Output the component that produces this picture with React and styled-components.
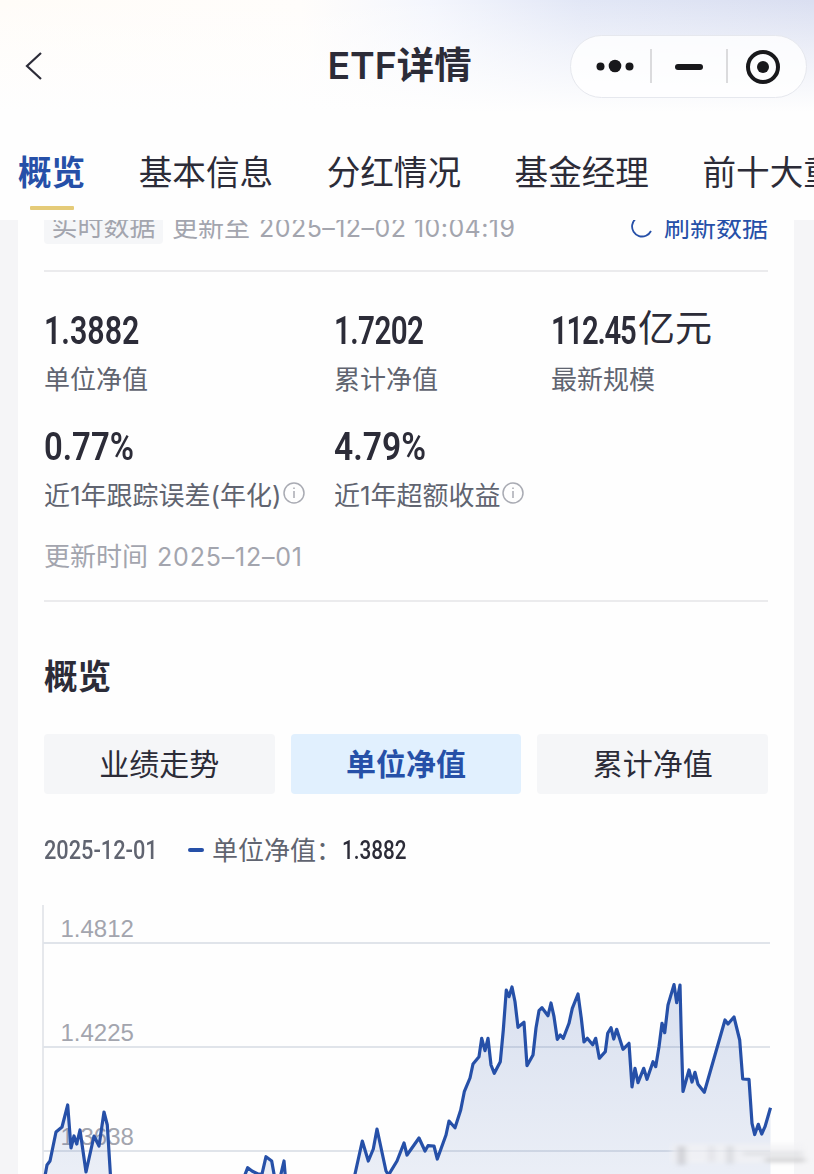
import React from "react";
import styled, { createGlobalStyle } from "styled-components";

const ink = "#2c2c38";
const blue = "#2650a8";

const GlobalStyle = createGlobalStyle`
  * { box-sizing: border-box; }
  html, body { margin: 0; height: 100%; overflow: hidden; }
  body {
    background: #f5f5f7;
    color: ${ink};
    font-family: Inter, "Noto Sans CJK SC", sans-serif;
  }
`;

const Screen = styled.div`
  width: 814px;
  height: 1174px;
  overflow: hidden;
  display: flex;
  flex-direction: column;
`;

const Header = styled.header`
  flex: none;
  height: 220px;
  background:
    linear-gradient(180deg, rgba(254, 254, 254, 0) 0, rgba(254, 254, 254, 0.5) 50px, #fefefe 112px),
    linear-gradient(90deg, #fffcf8 0, #fffdfb 300px, #f4f6fd 430px, #e2e7f6 580px, #dadff1 814px);
`;

const NavBar = styled.div`
  height: 132px;
  padding: 0 7px 0 24px;
  display: grid;
  grid-template-columns: 237px 1fr 237px;
  align-items: center;
`;

const BackIcon = styled.svg`
  width: 20px;
  height: 30px;
  display: block;
`;

const Title = styled.h1`
  margin: 0 32px 0 0;
  text-align: center;
  white-space: nowrap;
  font-size: 37.4px;
  font-weight: 600;
  line-height: 50px;
  span { font-weight: 700; }
`;

const Capsule = styled.div`
  justify-self: end;
  width: 237px;
  height: 63px;
  border: 1px solid #e6e8ee;
  border-radius: 32px;
  background: rgba(255, 255, 255, 0.8);
  svg { display: block; }
`;

const Tabs = styled.nav`
  display: flex;
  gap: 53.6px;
  padding: 17px 0 0 18px;
  overflow: hidden;
`;

const Tab = styled.div`
  flex: none;
  display: flex;
  flex-direction: column;
  align-items: center;
  gap: 9px;
  font-size: 33.6px;
  line-height: 48px;
  font-weight: ${(p) => (p.$active ? 700 : 400)};
  color: ${(p) => (p.$active ? blue : ink)};
  &::after {
    content: "";
    width: 44px;
    height: 4px;
    border-radius: 1px;
    background: ${(p) => (p.$active ? "#e5cb78" : "transparent")};
  }
`;

const Viewport = styled.div`
  flex: 1;
  min-height: 0;
  overflow: hidden;
  padding: 0 20px 0 18px;
`;

const Card = styled.main`
  display: flow-root;
  background: #fefefe;
  height: 100%;
  padding: 0 26px;
`;

const LiveRow = styled.div`
  display: flex;
  align-items: center;
  height: 36px;
  margin-top: -12px;
  font-size: 26px;
  line-height: 34px;
  color: #a3a5ae;
  white-space: nowrap;
`;

const Tag = styled.span`
  width: 119px;
  height: 36px;
  padding-top: 2px;
  text-align: center;
  background: #f5f6f8;
  border-radius: 4px;
  margin-right: 9px;
`;

const LiveText = styled.span`
  padding-top: 3px;
`;

const Stamp = styled.span`
  font-size: 25px;
  letter-spacing: ${(p) => p.$spacing}px;
  margin-left: 9px;
`;

const Refresh = styled.span`
  margin-left: auto;
  padding-top: 3px;
  display: flex;
  align-items: center;
  gap: 11px;
  color: ${blue};
  svg { margin-top: -3px; }
`;

const Divider = styled.hr`
  border: 0;
  height: 2px;
  margin: ${(p) => p.$top}px 0 0;
  background: #ebebed;
`;

const Stats = styled.section`
  display: grid;
  grid-template-columns: 290px 217px 1fr;
  row-gap: 20px;
  padding-top: 35px;
`;

const Stat = styled.div`
  height: 96px;
`;

const StatValue = styled.div`
  height: 48px;
  display: flex;
  align-items: center;
  font-size: 37px;
`;

const Unit = styled.span`
  line-height: 44px;
  padding-bottom: 4px;
`;

const Digits = styled.span`
  display: inline-block;
  width: ${(p) => p.$width}px;
  white-space: nowrap;
  font-family: Roboto, sans-serif;
  font-size: ${(p) => p.$size}px;
  font-weight: ${(p) => p.$weight || 600};
  letter-spacing: ${(p) => p.$spacing || 0}px;
  line-height: 1;
  color: ${(p) => p.$color || ink};
  transform: scaleX(${(p) => p.$scale || 0.8});
  transform-origin: 0 50%;
`;

const Label = styled.div`
  display: flex;
  align-items: center;
  height: 44px;
  white-space: nowrap;
  font-size: 26px;
  color: #606470;
`;

const InfoIcon = styled.svg`
  width: 22px;
  height: 22px;
  margin-left: 1px;
`;

const Updated = styled.div`
  margin-top: 20px;
  height: 36px;
  line-height: 36px;
  font-size: 26px;
  color: #a3a5ae;
`;

const SectionTitle = styled.h2`
  margin: 50px 0 0;
  height: 50px;
  line-height: 50px;
  font-size: 33.6px;
  font-weight: 700;
`;

const Segments = styled.div`
  display: grid;
  grid-template-columns: repeat(3, 1fr);
  gap: 16px;
  margin-top: 32px;
`;

const Segment = styled.button`
  height: 60px;
  padding: 0;
  border: 0;
  border-radius: 4px;
  font: inherit;
  font-size: 30px;
  line-height: 60px;
  font-weight: ${(p) => (p.$active ? 700 : 400)};
  color: ${(p) => (p.$active ? blue : ink)};
  background: ${(p) => (p.$active ? "#e1f0fe" : "#f5f6f8")};
`;

const Legend = styled.div`
  display: flex;
  align-items: center;
  height: 40px;
  margin-top: 36px;
  font-size: 26px;
  color: #606470;
  white-space: nowrap;
`;

const LegendMark = styled.i`
  width: 16px;
  height: 4px;
  border-radius: 2px;
  background: ${blue};
  margin: 0 8px 0 31px;
`;

const LegendName = styled.span`
  width: 130px;
  padding-bottom: 3px;
`;

const Chart = styled.svg`
  display: block;
  width: 772px;
  height: 274px;
  margin: 30px 0 0 -2px;
  overflow: visible;
`;

const navPoints =
  "45,1176 47,1165 50,1161 56,1132 62,1127 67.7,1105 71,1148 74,1136 76.7,1144 80,1130 86,1172 94,1136 99,1146 104,1112 107.3,1125 110.5,1176 115,1230 235,1230 244.5,1176 247.7,1167.7 252,1171 258,1174 262,1174 266,1156.7 271.7,1161 274,1174 277,1182 280.5,1176 284,1161 285.3,1176 290,1230 345,1230 355,1174 362.3,1141 368.3,1161 373.3,1149 377,1129 386,1171 388.5,1175 397,1161 404,1143 407,1155 419,1138 425,1151 428,1145.7 434,1146 437.3,1159 446,1135 449,1121 455,1127.7 460.7,1110 464.3,1091.7 470,1078 473,1064 479,1056.7 481.7,1038.3 485,1050.7 488,1038.3 491,1065 494.3,1073.3 500.3,1061.7 503.3,1030 506.3,990 509,996.7 512,987 515,1001.7 518,1027.3 524,1022.3 527,1065.7 533,1055 536,1028 539,1010.7 542,1007.7 548,1015.7 551,1003 554,1016.7 557.3,1039.3 560.3,1035 563.3,1038.3 569,1023.3 572.3,1008.3 578,994 581.3,1018.3 584,1042 587.3,1038.3 592.7,1044.7 595.7,1038.3 599.3,1058.3 605.3,1051.7 607.7,1033.3 611,1027.7 613.7,1039 616.7,1029.3 623,1049.3 629,1043.3 632,1087 635,1068.3 638,1082.7 643.7,1068.3 647,1079.3 653,1061.7 655.7,1066.7 659,1046.7 662,1023.3 664.7,1032.7 668,1005 674,984.6 676.7,1002.7 680,985 681.3,1036.7 683,1091.5 689,1070 692,1082 695,1072.3 698,1084.3 704.3,1092.3 725,1020 728,1024 734,1017 739.7,1040 742.7,1079 749,1079.3 752,1123.3 754.7,1134.5 758.3,1124.3 761.7,1134 765,1126.7 770.5,1107.7";

const gridLines = [
  { y: 943, text: "1.4812" },
  { y: 1047, text: "1.4225" },
  { y: 1151, text: "1.3638" },
];

const tabs = ["概览", "基本信息", "分红情况", "基金经理", "前十大重仓"];

const stats = [
  { value: "1.3882", label: "单位净值", width: 95 },
  { value: "1.7202", label: "累计净值", width: 95, scale: 0.78, spacing: -0.8 },
  { value: "112.45", unit: "亿元", label: "最新规模", width: 87, scale: 0.77, spacing: -1.6 },
  { value: "0.77%", label: "近1年跟踪误差(年化)", width: 95, scale: 0.865, info: true },
  { value: "4.79%", label: "近1年超额收益", width: 95, scale: 0.885, info: true },
];

const segments = ["业绩走势", "单位净值", "累计净值"];

function Info() {
  return (
    <InfoIcon viewBox="0 0 22 22" fill="none" stroke="#a9abb3" strokeWidth="1.5">
      <circle cx="11" cy="11" r="10" />
      <path d="M11 9v7M11 5.5v1.6" />
    </InfoIcon>
  );
}

function NavChart() {
  return (
    <Chart viewBox="42 900 772 274">
      <defs>
        <linearGradient id="area" x1="0" y1="984" x2="0" y2="1174" gradientUnits="userSpaceOnUse">
          <stop offset="0" stopColor="#2650a8" stopOpacity="0.17" />
          <stop offset="1" stopColor="#2650a8" stopOpacity="0.09" />
        </linearGradient>
        <filter id="soft" x="-20%" y="-50%" width="140%" height="200%">
          <feGaussianBlur stdDeviation="3 2" />
        </filter>
      </defs>
      <path d="M43 905V1174" stroke="#e6e8ec" strokeWidth="2" />
      {gridLines.map((line) => (
        <g key={line.y}>
          <path d={`M43 ${line.y}H770`} stroke="#e0e4ea" strokeWidth="2" />
          <text x="60.5" y={line.y - 6} fontFamily="Liberation Sans, sans-serif" fontSize="24" fill="#a3a5ae">
            {line.text}
          </text>
        </g>
      ))}
      <polygon points={`45,1230 ${navPoints} 770.5,1230`} fill="url(#area)" />
      <polyline points={navPoints} fill="none" stroke={blue} strokeWidth="3.2" strokeLinejoin="round" />
      <g filter="url(#soft)">
        <rect x="672" y="1144" width="132" height="19" fill="#f2f2f4" opacity="0.75" />
        <rect x="678" y="1146" width="7" height="19" fill="#a9abb3" opacity="0.55" />
        <rect x="709" y="1146" width="5" height="16" fill="#b5b7be" opacity="0.3" />
        <rect x="727" y="1146" width="6" height="18" fill="#b5b7be" opacity="0.45" />
        <rect x="743" y="1152" width="60" height="3" fill="#c4c5ca" opacity="0.5" />
        <rect x="765" y="1158" width="40" height="4" fill="#aaa" opacity="0.5" />
      </g>
    </Chart>
  );
}

export default function App() {
  return (
    <Screen>
      <GlobalStyle />
      <Header>
        <NavBar>
          <BackIcon viewBox="0 0 20 30" fill="none" stroke={ink} strokeWidth="2.2">
            <path d="M17 2 3 15l14 13" />
          </BackIcon>
          <Title>
            ETF<span>详情</span>
          </Title>
          <Capsule>
            <svg width="235" height="61" viewBox="571 36 235 61" fill="#18181b">
              <circle cx="600.5" cy="66.5" r="4" />
              <circle cx="615" cy="66" r="6.3" />
              <circle cx="629.5" cy="66.5" r="4" />
              <path d="M651 49v34M727 49v34" stroke="#cfcfd2" strokeWidth="1.5" />
              <rect x="675" y="64" width="28" height="6" rx="3" />
              <circle cx="763" cy="67" r="15" fill="none" stroke="#18181b" strokeWidth="4" />
              <circle cx="763" cy="67" r="6" />
            </svg>
          </Capsule>
        </NavBar>
        <Tabs>
          {tabs.map((name, i) => (
            <Tab key={name} $active={i === 0}>
              {name}
            </Tab>
          ))}
        </Tabs>
      </Header>
      <Viewport>
        <Card>
          <LiveRow>
            <Tag>实时数据</Tag>
            <LiveText>
              更新至
              <Stamp $spacing={0.45}>2025–12–02 10:04:19</Stamp>
            </LiveText>
            <Refresh>
              <svg width="22" height="24" viewBox="0 0 22 24" fill="none" stroke={blue} strokeWidth="1.8">
                <path d="M11 2.5a10 10 0 1 0 9 14.5" />
              </svg>
              刷新数据
            </Refresh>
          </LiveRow>
          <Divider $top={26} />
          <Stats>
            {stats.map((s) => (
              <Stat key={s.label}>
                <StatValue>
                  <Digits $size={38} $width={s.width} $scale={s.scale} $spacing={s.spacing}>
                    {s.value}
                  </Digits>
                  {s.unit && <Unit>{s.unit}</Unit>}
                </StatValue>
                <Label>
                  {s.label}
                  {s.info && <Info />}
                </Label>
              </Stat>
            ))}
          </Stats>
          <Updated>
            更新时间
            <Stamp $spacing={0.8}>2025–12–01</Stamp>
          </Updated>
          <Divider $top={25} />
          <SectionTitle>概览</SectionTitle>
          <Segments>
            {segments.map((name, i) => (
              <Segment key={name} $active={i === 1}>
                {name}
              </Segment>
            ))}
          </Segments>
          <Legend>
            <Digits $size={26} $width={113} $weight={500} $color="#606470" $scale={0.837}>
              2025-12-01
            </Digits>
            <LegendMark />
            <LegendName>单位净值：</LegendName>
            <Digits $size={26} $width={66} $weight={500} $scale={0.795}>
              1.3882
            </Digits>
          </Legend>
          <NavChart />
        </Card>
      </Viewport>
    </Screen>
  );
}
